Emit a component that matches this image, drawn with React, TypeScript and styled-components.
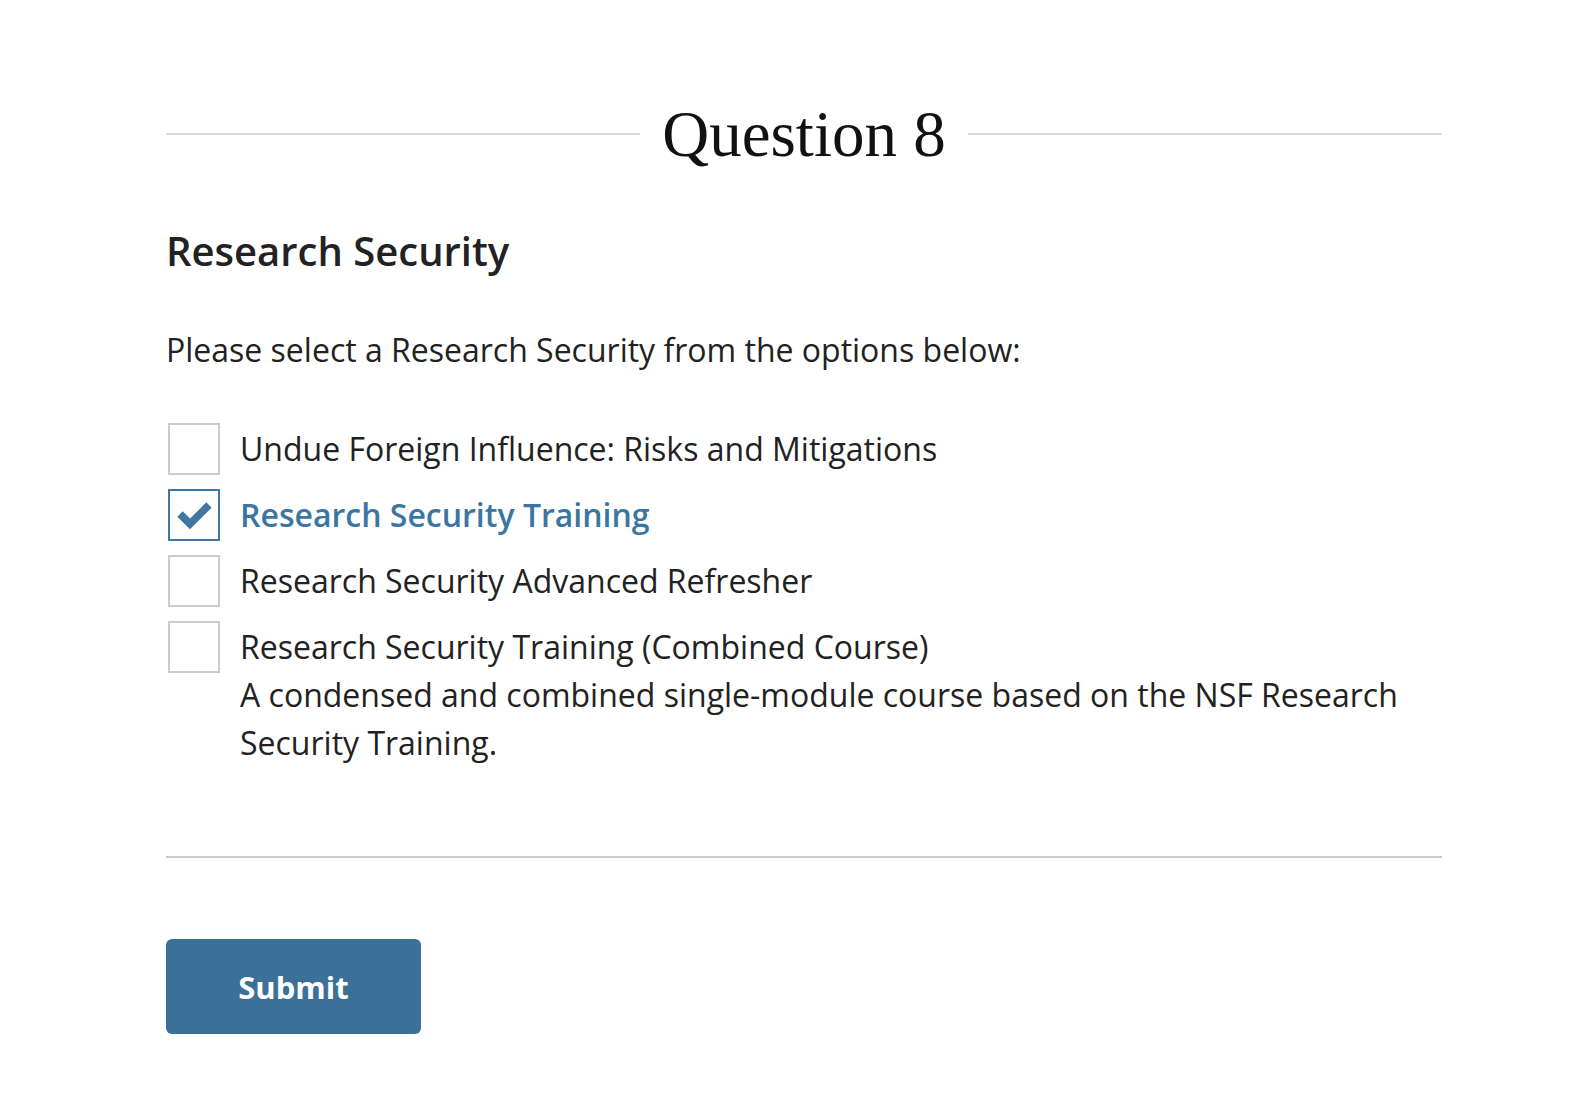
import React from "react";
import styled, { createGlobalStyle } from "styled-components";

const Global = createGlobalStyle`
  html, body { margin: 0; padding: 0; background: #ffffff; }
  body { font-family: "Open Sans", "Noto Sans", sans-serif; color: #222222; }
`;

const Page = styled.main`
  width: 1276px;
  margin-left: 166px;
  padding-top: 92px;
  padding-bottom: 60px;
`;

const TitleRow = styled.div`
  display: flex;
  align-items: center;
  gap: 22px;
`;

const Rule = styled.div`
  flex: 1;
  height: 2px;
  background: #d8d8d8;
`;

const Title = styled.h1`
  margin: 0;
  font-family: "Liberation Serif", "DejaVu Serif", serif;
  font-weight: 400;
  font-size: 65px;
  line-height: 84px;
  color: #111111;
`;

const SectionTitle = styled.h2`
  margin: 48px 0 0;
  font-size: 40px;
  font-weight: 600;
  line-height: 54px;
  color: #222222;
`;

const Prompt = styled.p`
  margin: 48px 0 0;
  font-size: 32px;
  line-height: 48px;
`;

const Options = styled.div`
  margin-top: 49px;
  display: flex;
  flex-direction: column;
  gap: 14px;
`;

const OptionRow = styled.label`
  display: flex;
  align-items: flex-start;
  gap: 20px;
  padding-left: 2px;
  cursor: pointer;
`;

const Box = styled.span<{ $checked: boolean }>`
  flex: none;
  width: 52px;
  height: 52px;
  box-sizing: border-box;
  border: 2px solid ${(p) => (p.$checked ? "#3f77a3" : "#cccccc")};
  display: flex;
  align-items: center;
  justify-content: center;
  background: #ffffff;
`;

const LabelText = styled.div<{ $checked: boolean }>`
  padding-top: 2px;
  font-size: 32px;
  line-height: 48px;
  font-weight: ${(p) => (p.$checked ? 600 : 400)};
  color: ${(p) => (p.$checked ? "#3b76a3" : "#222222")};
`;

const Description = styled.div`
  font-weight: 400;
  color: #222222;
`;

const Divider = styled.hr`
  margin: 89px 0 0;
  border: none;
  height: 2px;
  background: #cccccc;
`;

const SubmitButton = styled.button`
  display: block;
  margin-top: 81px;
  width: 255px;
  height: 95px;
  border: none;
  border-radius: 6px;
  background: #3b7098;
  color: #ffffff;
  font-family: "Open Sans", "Noto Sans", sans-serif;
  font-size: 31px;
  font-weight: 700;
  cursor: pointer;
`;

const Check = () => (
  <svg width="40" height="40" viewBox="0 0 40 40" aria-hidden="true">
    <polyline
      points="6,19 16,29 35,10"
      fill="none"
      stroke="#3f77a3"
      strokeWidth="7.5"
      strokeLinejoin="miter"
    />
  </svg>
);

type Opt = { title: string; desc?: string; checked?: boolean };

const options: Opt[] = [
  { title: "Undue Foreign Influence: Risks and Mitigations" },
  { title: "Research Security Training", checked: true },
  { title: "Research Security Advanced Refresher" },
  {
    title: "Research Security Training (Combined Course)",
    desc: "A condensed and combined single-module course based on the NSF Research Security Training.",
  },
];

export default function App() {
  return (
    <>
      <Global />
      <Page>
        <TitleRow>
          <Rule />
          <Title>Question 8</Title>
          <Rule />
        </TitleRow>
        <SectionTitle>Research Security</SectionTitle>
        <Prompt>Please select a Research Security from the options below:</Prompt>
        <Options>
          {options.map((o) => (
            <OptionRow key={o.title}>
              <Box $checked={!!o.checked}>{o.checked && <Check />}</Box>
              <LabelText $checked={!!o.checked}>
                {o.title}
                {o.desc && <Description>{o.desc}</Description>}
              </LabelText>
            </OptionRow>
          ))}
        </Options>
        <Divider />
        <SubmitButton>Submit</SubmitButton>
      </Page>
    </>
  );
}
